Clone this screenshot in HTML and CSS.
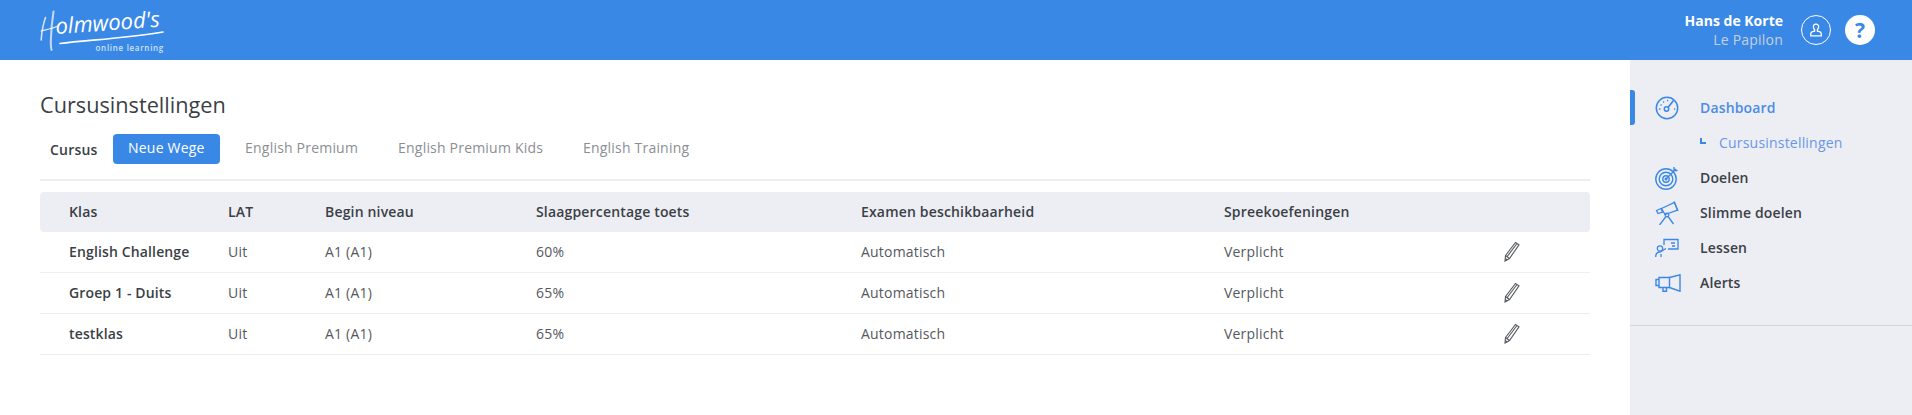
FILE: index.html
```html
<!DOCTYPE html>
<html lang="nl">
<head>
<meta charset="utf-8">
<title>Cursusinstellingen</title>
<link rel="stylesheet" href="styles.css">
</head>
<body>
<header class="topbar">
  <a class="logo">
    <svg class="logo-art" width="126" height="46" viewBox="0 0 126 46" fill="none" stroke="#fff">
      <path d="M13.500 2.500C12 12 11 24 10.800 32 10.700 36 11 39 11.500 41" stroke-width="2" stroke-linecap="round" opacity=".7"/>
      <path d="M5.500 8.500C3.500 14 1.800 22 1.200 31" stroke-width="1.500" stroke-linecap="round" opacity=".8"/>
      <path d="M1 22C7 20.500 13 19.500 19 16.500" stroke-width="1.100" stroke-linecap="round" opacity=".85"/>
      <path d="M20 34.500C50 31 88 29 123 23" stroke-width="1.700" stroke-linecap="round"/>
      <text class="logo-word" x="16" y="25" transform="rotate(-4 16 25)">olmwood's</text>
    </svg>
    <span class="logo-sub">online learning</span>
  </a>
  <div class="user">
    <div class="user-text">
      <strong class="user-name">Hans de Korte</strong>
      <span class="user-org">Le Papilon</span>
    </div>
    <span class="round round-line">
      <svg width="14" height="14" viewBox="0 0 16 16" fill="none" stroke="#fff" stroke-width="1.500"><path d="M8 1.200c-2 0-3 1.400-3 3.200 0 1.500.7 2.600 1.400 3.300v1.500c-1.300.7-4.400.7-4.400 2.900v2.600h12v-2.600c0-2.200-3.100-2.200-4.400-2.900V7.700C10.300 7 11 5.900 11 4.400c0-1.800-1-3.200-3-3.200z"/></svg>
    </span>
    <span class="round round-fill">?</span>
  </div>
</header>
<div class="layout">
  <main class="content">
    <h1 class="title">Cursusinstellingen</h1>
    <nav class="tabs">
      <span class="tabs-label">Cursus</span>
      <a class="tab tab-active">Neue Wege</a>
      <a class="tab">English Premium</a>
      <a class="tab">English Premium Kids</a>
      <a class="tab">English Training</a>
    </nav>
    <table class="grid">
      <colgroup>
        <col class="c1"><col class="c2"><col class="c3"><col class="c4"><col class="c5"><col class="c6"><col class="c7">
      </colgroup>
      <thead>
        <tr><th>Klas</th><th>LAT</th><th>Begin niveau</th><th>Slaagpercentage toets</th><th>Examen beschikbaarheid</th><th>Spreekoefeningen</th><th></th></tr>
      </thead>
      <tbody>
        <tr><td class="name">English Challenge</td><td>Uit</td><td>A1 (A1)</td><td>60%</td><td>Automatisch</td><td>Verplicht</td><td><svg class="pencil" width="16" height="21" viewBox="0 0 16 21" fill="none" stroke="#55595f" stroke-width="1.100"><path d="M1.500 14.500 11.500 1.500 15 3.800 5.500 17.500 1 20z"/><path d="M1.500 14.500 5.500 17.500M3.200 15.500 13 2.500M1.300 17.500 3.200 19"/></svg></td></tr>
        <tr><td class="name">Groep 1 - Duits</td><td>Uit</td><td>A1 (A1)</td><td>65%</td><td>Automatisch</td><td>Verplicht</td><td><svg class="pencil" width="16" height="21" viewBox="0 0 16 21" fill="none" stroke="#55595f" stroke-width="1.100"><path d="M1.500 14.500 11.500 1.500 15 3.800 5.500 17.500 1 20z"/><path d="M1.500 14.500 5.500 17.500M3.200 15.500 13 2.500M1.300 17.500 3.200 19"/></svg></td></tr>
        <tr><td class="name">testklas</td><td>Uit</td><td>A1 (A1)</td><td>65%</td><td>Automatisch</td><td>Verplicht</td><td><svg class="pencil" width="16" height="21" viewBox="0 0 16 21" fill="none" stroke="#55595f" stroke-width="1.100"><path d="M1.500 14.500 11.500 1.500 15 3.800 5.500 17.500 1 20z"/><path d="M1.500 14.500 5.500 17.500M3.200 15.500 13 2.500M1.300 17.500 3.200 19"/></svg></td></tr>
      </tbody>
    </table>
  </main>
  <aside class="side">
    <ul class="menu">
      <li class="item item-active">
        <svg class="ico" width="24" height="24" viewBox="0 0 24 24" fill="none" stroke="#3a88e6" stroke-width="1.500"><circle cx="12" cy="12" r="10.700"/><circle cx="11.500" cy="13" r="2.200"/><path d="M13 11.500 18.500 4.500" stroke-width="1.700"/><path d="M4 13h1.500M5.500 9h1.200M8 6h1.200M12 4.500h1.200M19 13h1.200" stroke-width="1.300"/></svg>
        <span>Dashboard</span>
      </li>
      <li class="sub"><span class="sub-mark"></span><span>Cursusinstellingen</span></li>
      <li class="item">
        <svg class="ico" width="24" height="24" viewBox="0 0 24 24" fill="none" stroke="#3a88e6" stroke-width="1.400"><circle cx="11" cy="13" r="10.200"/><circle cx="11" cy="13" r="6.800"/><circle cx="11" cy="13" r="3.200"/><circle cx="11" cy="13" r=".8"/><path d="M11 13 21 3M19 1v3.500h3.500"/></svg>
        <span>Doelen</span>
      </li>
      <li class="item">
        <svg class="ico" width="24" height="24" viewBox="0 0 24 24" fill="none" stroke="#3a88e6" stroke-width="1.300"><path d="M6.500 7.500 19.500 1.500 22.500 9 10 13.500z"/><path d="M19 0.500 23 10M1.500 9.500 6 7.500 7.500 11 3 12.500z"/><circle cx="12" cy="14" r="1.800"/><path d="M11 15.500 4.500 24M13 15.500 18.500 23"/></svg>
        <span>Slimme doelen</span>
      </li>
      <li class="item">
        <svg class="ico" width="24" height="24" viewBox="0 0 24 24" fill="none" stroke="#3a88e6" stroke-width="1.300"><path d="M9 9V3.500h14V13H13"/><path d="M16 7h4M17 10h3"/><circle cx="5" cy="12.500" r="2.700"/><path d="M0.700 21c0-4 1.500-5 4.300-5l6-3.500M6 21v-3"/></svg>
        <span>Lessen</span>
      </li>
      <li class="item">
        <svg class="ico ico-wide" width="26" height="18" viewBox="0 0 26 18" fill="none" stroke="#3a88e6" stroke-width="1.400"><path d="M4 3.500h10.500v10H4z"/><path d="M4 5.500H1v6h3"/><path d="M14.500 3.500 25 .8v16.400l-10.500-3.700"/><path d="M8 13.500v3.800h3.500v-3.800"/></svg>
        <span>Alerts</span>
      </li>
    </ul>
  </aside>
</div>
</body>
</html>
```
FILE: styles.css
```css
* { box-sizing: border-box; }
html, body { margin: 0; height: 100%; }
body {
  font-family: "Open Sans", "Liberation Sans", sans-serif;
  font-size: 14px;
  letter-spacing: .2px;
  color: #3b3f46;
  background: #fff;
  overflow: hidden;
}
.topbar {
  height: 60px;
  background: #3a88e6;
  display: flex;
  justify-content: space-between;
  align-items: center;
  padding: 0 37px 0 40px;
}
.logo { position: relative; display: block; width: 126px; height: 46px; margin-top: 4px; }
.logo-art { display: block; overflow: visible; }
.logo-word {
  font-family: "Open Sans", sans-serif;
  font-style: italic;
  font-weight: 400;
  font-size: 22px;
  letter-spacing: 0;
  fill: #fff;
  stroke: none;
}
.logo-sub {
  position: absolute;
  right: 2px;
  bottom: 2px;
  font-size: 8px;
  font-weight: 600;
  line-height: 10px;
  letter-spacing: .7px;
  color: #cfe2f8;
  white-space: nowrap;
}
.user { display: flex; align-items: center; }
.user-text { display: flex; flex-direction: column; align-items: flex-end; line-height: 19px; margin-right: 18px; }
.user-name { color: #fff; font-weight: 700; font-size: 14px; letter-spacing: 0; }
.user-org { color: #c6cfdb; font-size: 14px; }
.round {
  width: 30px;
  height: 30px;
  border-radius: 50%;
  display: flex;
  align-items: center;
  justify-content: center;
}
.round-line { border: 1px solid #fff; margin-right: 14px; }
.round-fill { background: #fff; color: #3a88e6; font-weight: 700; font-size: 21px; letter-spacing: 0; }
.layout { display: flex; height: 355px; }
.content { flex: 1; padding: 30px 40px 0 40px; min-width: 0; }
.title { margin: 0; font-weight: 400; font-size: 21.700px; letter-spacing: 0; line-height: 30px; color: #3b3f46; }
.tabs {
  display: flex;
  align-items: center;
  margin-top: 14px;
  height: 47px;
  padding: 0 0 15px 10px;
  border-bottom: 2px solid #eeeef2;
}
.tabs-label { font-weight: 600; margin-right: 15px; color: #3b3f46; }
.tab { padding: 0 15px; height: 30px; line-height: 28px; color: #8b8e93; margin-right: 10px; }
.tab-active { background: #3a88e6; color: #fff; border-radius: 4px; padding: 0 15.500px; margin-right: 10px; }
.grid { width: 100%; table-layout: fixed; border-collapse: separate; border-spacing: 0; margin-top: 11px; }
.c1 { width: 188px; } .c2 { width: 97px; } .c3 { width: 211px; } .c4 { width: 325px; }
.c5 { width: 363px; } .c6 { width: 281px; } .c7 { width: 85px; }
.grid th {
  height: 40px;
  background: #edeef4;
  text-align: left;
  font-weight: 600;
  font-size: 14px;
  letter-spacing: .17px;
  padding: 0 0 2px;
}
.grid th:first-child { border-radius: 4px 0 0 4px; padding-left: 29px; }
.grid th:last-child { border-radius: 0 4px 4px 0; }
.grid td { height: 41px; border-bottom: 1px solid #eeeef2; padding: 0 0 2px; font-size: 14px; color: #55585e; }
.grid td:first-child { padding-left: 29px; }
.grid td.name { font-weight: 600; color: #3b3f46; letter-spacing: .14px; }
.pencil { display: block; margin-left: -1px; }
.side {
  width: 282px;
  flex: none;
  background: #edeef4;
  height: 100%;
}
.menu { list-style: none; margin: 0; padding: 30px 0 25px; border-bottom: 1px solid #d4d5da; }
.item {
  position: relative;
  display: flex;
  align-items: center;
  height: 35px;
  padding-left: 25px;
  font-weight: 600;
  letter-spacing: .15px;
  color: #3b3f46;
}
.ico { width: 24px; flex: none; margin-right: 21px; }
.ico-wide { width: 26px; margin-right: 19px; }
.item-active { color: #4a8be6; }
.item-active::before {
  content: "";
  position: absolute;
  left: 0;
  top: 0;
  width: 5px;
  height: 35px;
  background: #3a88e6;
  border-radius: 0 3px 3px 0;
}
.sub { display: flex; align-items: center; height: 35px; padding-left: 70px; color: #6a96e8; font-weight: 400; }
.sub-mark { width: 6px; height: 6px; border-left: 2px solid #3a88e6; border-bottom: 2px solid #3a88e6; margin-right: 13px; margin-top: -4px; }
```
